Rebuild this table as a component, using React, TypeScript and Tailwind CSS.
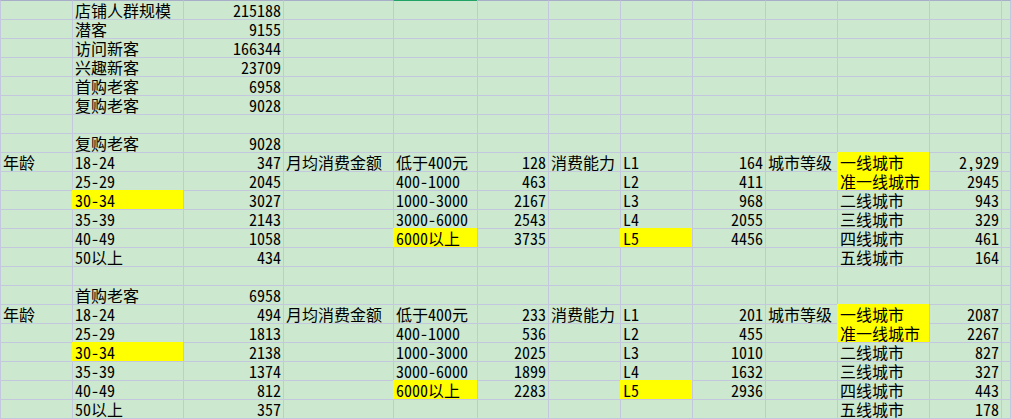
import React from "react";

// Column widths measured from the sheet's gridlines (each width includes the 1px left border).
const COLS = 14;

type Row = (string | number)[];

const top: Row[] = [
  ["", "店铺人群规模", 215188],
  ["", "潜客", 9155],
  ["", "访问新客", 166344],
  ["", "兴趣新客", 23709],
  ["", "首购老客", 6958],
  ["", "复购老客", 9028],
  [],
];

function block(title: string, total: number, d: {
  age: number[];
  spend: number[];
  level: number[];
  city: (number | string)[];
}): Row[] {
  const ages = ["18-24", "25-29", "30-34", "35-39", "40-49", "50以上"];
  const spends = ["低于400元", "400-1000", "1000-3000", "3000-6000", "6000以上"];
  const cities = ["一线城市", "准一线城市", "二线城市", "三线城市", "四线城市", "五线城市"];
  const rows: Row[] = [["", title, total]];
  for (let i = 0; i < 6; i++) {
    rows.push([
      i === 0 ? "年龄" : "",
      ages[i],
      d.age[i],
      i === 0 ? "月均消费金额" : "",
      spends[i] ?? "",
      d.spend[i] ?? "",
      i === 0 ? "消费能力" : "",
      i < 5 ? `L${i + 1}` : "",
      d.level[i] ?? "",
      i === 0 ? "城市等级" : "",
      cities[i],
      d.city[i],
    ]);
  }
  return rows;
}

const rows: Row[] = [
  ...top,
  ...block("复购老客", 9028, {
    age: [347, 2045, 3027, 2143, 1058, 434],
    spend: [128, 463, 2167, 2543, 3735],
    level: [164, 411, 968, 2055, 4456],
    city: ["2,929", 2945, 943, 329, 461, 164],
  }),
  [],
  ...block("首购老客", 6958, {
    age: [494, 1813, 2138, 1374, 812, 357],
    spend: [233, 536, 2025, 1899, 2283],
    level: [201, 455, 1010, 1632, 2936],
    city: [2087, 2267, 827, 327, 443, 178],
  }),
  [],
];

// Highlighted cells, as "row-col".
const yellow = new Set([
  "10-1", "12-4", "12-7", "8-10", "9-10",
  "18-1", "20-4", "20-7", "16-10", "17-10",
]);

function isNumber(v: string | number) {
  return typeof v === "number" || /^[\d,]+$/.test(v);
}

function Cell({ value, r, c }: { value: string | number; r: number; c: number }) {
  const hi = yellow.has(`${r}-${c}`);
  const topColor =
    r === 0 ? (c === 4 ? "border-t-[#21a366]" : "border-t-[#a9aec8]") : hi ? "border-t-[#ffff00]" : "border-t-[#c4c8de]";
  return (
    <div
      className={`h-[19px] overflow-hidden whitespace-nowrap border-t border-l px-[2px] text-[16px] leading-[18px] text-black ${topColor} ${
        hi ? "bg-[#ffff00] border-l-[#ffff00]" : "border-l-[#c4c8de]"
      } ${value !== "" && isNumber(value) ? "text-right" : "text-left"}`}
    >
      {value}
    </div>
  );
}

export default function App() {
  return (
    <div
      className="h-[419px] w-[1011px] overflow-hidden bg-[#cce8cf]"
      style={{ fontFamily: '"Noto Sans Mono CJK SC", "Noto Sans CJK SC", "Liberation Mono", monospace' }}
    >
      <div className="grid grid-cols-[72px_111px_100px_110px_84px_71px_72px_72px_73px_72px_92px_72px_9px_60px]">
        {rows.map((row, r) =>
          Array.from({ length: COLS }, (_, c) => (
            <Cell key={`${r}-${c}`} value={row[c] ?? ""} r={r} c={c} />
          ))
        )}
      </div>
    </div>
  );
}
